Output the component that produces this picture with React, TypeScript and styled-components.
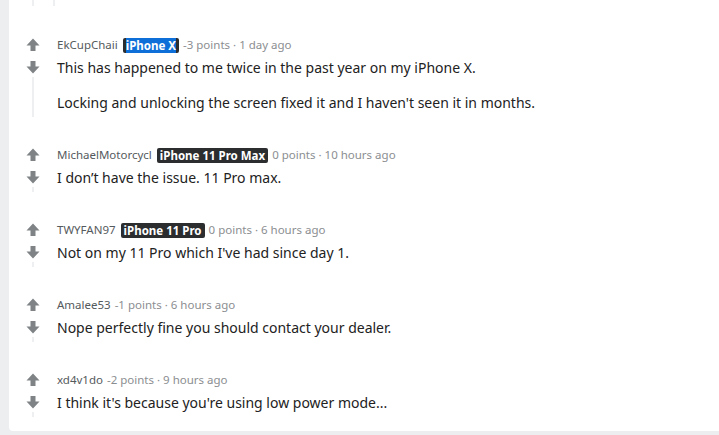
import React from "react";
import styled, { createGlobalStyle } from "styled-components";

const Global = createGlobalStyle`
  html, body { margin: 0; padding: 0; background: #edeef0; }
  body { font-family: "Noto Sans", "DejaVu Sans", sans-serif; }
`;

const Page = styled.div`
  width: 719px;
  height: 435px;
  background: #edeef0;
  overflow: hidden;
`;

const Card = styled.div`
  margin-left: 9px;
  height: 431px;
  background: #ffffff;
  border-bottom-left-radius: 4px;
  display: flex;
  flex-direction: column;
`;

const TopStub = styled.div`
  height: 6px;
  display: flex;
  padding-left: 23px;
  gap: 19px;
  margin-bottom: 31px;
`;

const StubLine = styled.div`
  width: 2px;
  background: #edeff1;
`;

const List = styled.div`
  display: flex;
  flex-direction: column;
  gap: 30px;
`;

const Row = styled.div`
  display: flex;
  padding-left: 12px;
`;

const VoteCol = styled.div`
  width: 24px;
  display: flex;
  flex-direction: column;
  align-items: center;
`;

const VoteBtn = styled.div<{ $down?: boolean }>`
  height: ${(p) => (p.$down ? "22px" : "16px")};
  width: 24px;
  display: flex;
  align-items: center;
  justify-content: center;
  padding-top: ${(p) => (p.$down ? "6px" : "0")};
  box-sizing: border-box;
  color: #7f8386;
`;

const Thread = styled.div`
  flex: 1;
  width: 2px;
  margin-top: 2px;
  background: #edeff1;
`;

const Content = styled.div`
  margin-left: 12px;
  padding-bottom: 4px;
  display: flex;
  flex-direction: column;
`;

const Header = styled.div`
  height: 16px;
  display: flex;
  align-items: center;
  font-size: 12px;
  line-height: 16px;
  white-space: nowrap;
`;

const User = styled.span`
  color: #555a5d;
  font-size: 11.5px;
`;

const Flair = styled.span<{ $blue?: boolean }>`
  margin-left: 5px;
  padding: 0 3px;
  height: 15px;
  display: inline-flex;
  align-items: center;
  background: #2b2d2f;
  border-radius: 2px;
  color: #ffffff;
  font-weight: 700;
  font-size: 11.5px;
  line-height: 15px;
  span {
    background: ${(p) => (p.$blue ? "#0f6fd8" : "transparent")};
  }
`;

const Meta = styled.span`
  margin-left: 4px;
  color: #8b8e91;
  font-size: 11.5px;
`;

const Body = styled.div`
  margin-top: 4px;
  color: #222222;
  font-size: 14px;
  line-height: 21px;
  p {
    margin: 0;
  }
  p + p {
    margin-top: 14px;
  }
`;

const Arrow = ({ down }: { down?: boolean }) => (
  <svg
    width="14"
    height="14"
    viewBox="0 0 14 14"
    style={down ? { transform: "rotate(180deg)" } : undefined}
  >
    <path d="M7 0.5 L13.5 7.5 H9.5 V13 H4.5 V7.5 H0.5 Z" fill="currentColor" />
  </svg>
);

type C = {
  user: string;
  flair?: string;
  blue?: boolean;
  meta: string;
  body: string[];
};

const comments: C[] = [
  {
    user: "EkCupChaii",
    flair: "iPhone X",
    blue: true,
    meta: "-3 points · 1 day ago",
    body: [
      "This has happened to me twice in the past year on my iPhone X.",
      "Locking and unlocking the screen fixed it and I haven't seen it in months.",
    ],
  },
  {
    user: "MichaelMotorcycl",
    flair: "iPhone 11 Pro Max",
    meta: "0 points · 10 hours ago",
    body: ["I don’t have the issue. 11 Pro max."],
  },
  {
    user: "TWYFAN97",
    flair: "iPhone 11 Pro",
    meta: "0 points · 6 hours ago",
    body: ["Not on my 11 Pro which I've had since day 1."],
  },
  {
    user: "Amalee53",
    meta: "-1 points · 6 hours ago",
    body: ["Nope perfectly fine you should contact your dealer."],
  },
  {
    user: "xd4v1do",
    meta: "-2 points · 9 hours ago",
    body: ["I think it's because you're using low power mode..."],
  },
];

export default function App() {
  return (
    <Page>
      <Global />
      <Card>
        <TopStub>
          <StubLine />
          <StubLine />
        </TopStub>
        <List>
          {comments.map((c) => (
            <Row key={c.user}>
              <VoteCol>
                <VoteBtn>
                  <Arrow />
                </VoteBtn>
                <VoteBtn $down>
                  <Arrow down />
                </VoteBtn>
                <Thread />
              </VoteCol>
              <Content>
                <Header>
                  <User>{c.user}</User>
                  {c.flair && (
                    <Flair $blue={c.blue}>
                      <span>{c.flair}</span>
                    </Flair>
                  )}
                  <Meta>{c.meta}</Meta>
                </Header>
                <Body>
                  {c.body.map((t) => (
                    <p key={t}>{t}</p>
                  ))}
                </Body>
              </Content>
            </Row>
          ))}
        </List>
      </Card>
    </Page>
  );
}
